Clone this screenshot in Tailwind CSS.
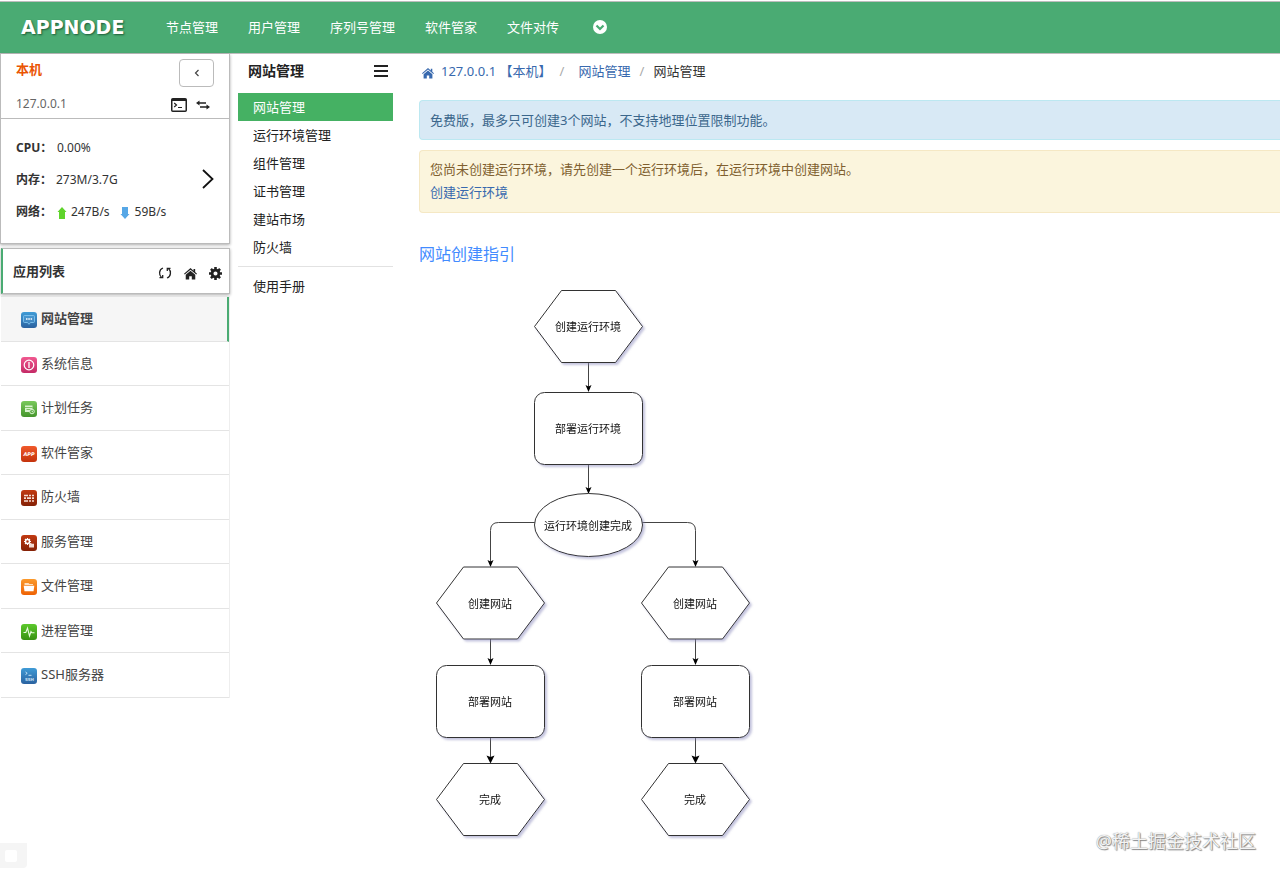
<!DOCTYPE html>
<html lang="zh-CN">
<head>
<meta charset="utf-8">
<meta name="viewport" content="width=device-width, initial-scale=1">
<title>网站管理 - AppNode</title>
<script src="https://cdn.jsdelivr.net/npm/@tailwindcss/browser@4"></script>
</head>
<body class="relative flex min-h-screen flex-col bg-white font-['Noto_Sans','Noto_Sans_CJK_SC',sans-serif] text-[13px] leading-5 text-[#333]">

<svg class="absolute size-0" aria-hidden="true">
  <defs>
    <symbol id="home" viewBox="0 0 12 12">
      <path fill="currentColor" d="M6 1 8.800 3.400V1.800h1.500v2.900L12 6.200l-.7.8L6 2.500.7 7 0 6.200z"/>
      <path fill="currentColor" d="M6 3.500 10.400 7.200V11.500H7.200V8.500H4.800v3H1.600V7.200z"/>
    </symbol>
    <linearGradient id="blue" x2="0" y2="1"><stop stop-color="#3f9bd6"/><stop offset="1" stop-color="#2b62a0"/></linearGradient>
    <linearGradient id="pink" x2="0" y2="1"><stop stop-color="#f0588f"/><stop offset="1" stop-color="#c42a66"/></linearGradient>
    <linearGradient id="green" x2="0" y2="1"><stop stop-color="#79c95c"/><stop offset="1" stop-color="#45952c"/></linearGradient>
    <linearGradient id="red" x2="0" y2="1"><stop stop-color="#f0592b"/><stop offset="1" stop-color="#c4330c"/></linearGradient>
    <linearGradient id="brick" x2="0" y2="1"><stop stop-color="#c23a12"/><stop offset="1" stop-color="#842106"/></linearGradient>
    <linearGradient id="orange" x2="0" y2="1"><stop stop-color="#fb9a2c"/><stop offset="1" stop-color="#ee6204"/></linearGradient>
    <linearGradient id="lime" x2="0" y2="1"><stop stop-color="#5cc92c"/><stop offset="1" stop-color="#389112"/></linearGradient>
  </defs>
</svg>

<header class="mt-px flex h-[53px] items-center border-y border-[#bdbdbd] bg-[#4aab73] pb-[2px] pl-[21px] text-white">
  <a href="#" class="w-[130px] font-['DejaVu_Sans'] text-[19px] leading-6 font-bold [text-shadow:1px_1px_2px_#1d5c38]">APPNODE</a>
  <nav class="flex items-center gap-[30px] pl-[15px]">
    <a href="#">节点管理</a>
    <a href="#">用户管理</a>
    <a href="#">序列号管理</a>
    <a href="#">软件管家</a>
    <a href="#">文件对传</a>
    <button type="button" aria-label="更多" class="ml-1 cursor-pointer">
      <svg class="size-[14px]" viewBox="0 0 14 14"><circle cx="7" cy="7" r="7" fill="#fff"/><path d="M3.500 5.500 7 9l3.500-3.500" fill="none" stroke="#4aab73" stroke-width="2.200"/></svg>
    </button>
  </nav>
</header>

<div class="flex flex-1">
  <aside class="w-[230px] shrink-0">
    <section class="border border-t-0 border-[#bbb] shadow-[0_1px_3px_#0005]">
      <div class="border-b border-[#bbb] pt-[5px] pr-[15px] pb-1 pl-[15px]">
        <div class="flex items-start justify-between">
          <h2 class="font-bold text-[#ea5504]">本机</h2>
          <button type="button" aria-label="收起" class="flex h-7 w-[35px] cursor-pointer items-center justify-center rounded border border-[#bbb]">
            <svg class="size-2" viewBox="0 0 8 8"><path d="M5.500 1 2.500 4l3 3" fill="none" stroke="#444" stroke-width="1.200"/></svg>
          </button>
        </div>
        <div class="mt-[7px] flex items-center justify-between">
          <span class="text-xs leading-5 text-[#666]">127.0.0.1</span>
          <span class="flex items-center gap-[9px] pt-px pr-1">
            <button type="button" aria-label="终端" class="cursor-pointer"><svg class="block h-[14px] w-4" viewBox="0 0 16 14"><rect x=".75" y=".75" width="14.500" height="12.500" rx="1" fill="none" stroke="#222" stroke-width="1.500"/><path d="M1 2h14" stroke="#222" stroke-width="2"/><path d="m3.200 5 2.300 2-2.300 2M7 9.500h4" fill="none" stroke="#222" stroke-width="1.200"/></svg></button>
            <button type="button" aria-label="切换" class="cursor-pointer"><svg class="block h-[10px] w-[14px]" viewBox="0 0 14 10"><path d="M0 3 3.500.5v1.700H10v1.600H3.500v1.700zM14 7l-3.500 2.500V7.800H4V6.200h6.500V4.500z" fill="#222"/></svg></button>
          </span>
        </div>
      </div>
      <div class="flex items-center justify-between pt-[13px] pr-[14px] pb-[15px] pl-[15px] text-xs">
        <dl class="text-xs">
          <div class="flex h-8 items-center"><dt class="w-[41px] font-bold">CPU：</dt><dd>0.00%</dd></div>
          <div class="flex h-8 items-center"><dt class="w-10 font-bold">内存：</dt><dd>273M/3.7G</dd></div>
          <div class="flex h-8 items-center"><dt class="w-10 font-bold">网络：</dt>
            <dd class="flex items-center">
              <svg class="mt-[2px] mr-1 ml-px h-3 w-[10px]" viewBox="0 0 10 12"><path d="M5 0 9.500 5H8v7H2V5H.5z" fill="#5fd42c"/></svg>247B/s
              <svg class="mt-[2px] mr-[5px] ml-[10px] h-3 w-[10px]" viewBox="0 0 10 12"><path d="M5 12 9.500 7H8V0H2v7H.5z" fill="#56a7e6"/></svg>59B/s
            </dd>
          </div>
        </dl>
        <button type="button" aria-label="展开" class="cursor-pointer"><svg class="mb-[2px] h-5 w-[14px]" viewBox="0 0 14 20"><path d="m2 1 9.500 9L2 19" fill="none" stroke="#111" stroke-width="1.800"/></svg></button>
      </div>
    </section>

    <section class="mt-1 ml-px flex h-[46px] items-center justify-between border border-l-2 border-[#bbb] border-l-[#4aab73] pr-[7px] pl-[10px] shadow-[0_1px_3px_#0005]">
      <h2 class="font-bold">应用列表</h2>
      <div class="flex items-center gap-3 pt-1 text-[#222]">
        <button type="button" aria-label="刷新" class="cursor-pointer"><svg class="size-[14px]" viewBox="0 0 14 14" fill="none" stroke="currentColor" stroke-width="1.300"><path d="M5 2C.7 3.500.7 9 3.500 11.500M1.500 11.700h3.200V9M9 12c4.300-1.500 4.300-7 1.500-9.500M12.500 2.300H9.300V5"/></svg></button>
        <button type="button" aria-label="主页" class="cursor-pointer"><svg class="size-[13px]"><use href="#home"/></svg></button>
        <button type="button" aria-label="设置" class="cursor-pointer"><svg class="size-[13px]" viewBox="0 0 14 14"><circle cx="7" cy="7" r="3.700" fill="none" stroke="currentColor" stroke-width="3"/><path d="M7 0v3M7 11v3M0 7h3M11 7h3M2.100 2.100l2 2M9.900 9.900l2 2M2.100 11.900l2-2M9.900 4.100l2-2" stroke="currentColor" stroke-width="2.800"/></svg></button>
      </div>
    </section>

    <ul class="mt-[2px] ml-px border-t border-r border-[#e4e4e4] border-r-[#eee] text-[#444] [&_a]:flex [&_a]:h-full [&_a]:items-center [&_a]:gap-1 [&_a]:pl-5 [&_li]:border-b [&_li]:border-[#e4e4e4] [&_li:nth-child(even)]:h-11 [&_li:nth-child(odd)]:h-[45px] [&_span]:mb-[2px] [&_svg]:mt-[2px] [&_svg]:size-4">
      <li class="border-r-2 border-r-[#4aab73]! bg-[#f6f6f6] font-bold"><a href="#"><svg viewBox="0 0 16 16"><rect width="16" height="16" rx="3" fill="url(#blue)"/><path d="M3.500 3.500h9q1 0 1 1v5q0 1-1 1H9.500L8 12.300 6.500 10.500h-3q-1 0-1-1v-5q0-1 1-1z" fill="#67b0e0" fill-opacity=".3" stroke="#7fc3ee" stroke-width=".9"/><path d="M5 7h1.500M7.300 7h1.500M9.600 7h1.500" stroke="#fff" stroke-width="1.300"/></svg><span>网站管理</span></a></li>
      <li><a href="#"><svg viewBox="0 0 16 16"><rect width="16" height="16" rx="3" fill="url(#pink)"/><circle cx="8" cy="8" r="4.800" fill="none" stroke="#fff" stroke-width="1.200"/><path d="M8 5v6" stroke="#fff" stroke-width="1.300"/></svg><span>系统信息</span></a></li>
      <li><a href="#"><svg viewBox="0 0 16 16"><rect width="16" height="16" rx="3" fill="url(#green)"/><path d="M4 4.500h7.500V11H4z" fill="#d9f2cf"/><path d="M4 6.500h7.500M5.500 8.500h5" stroke="#64b548" stroke-width=".8"/><circle cx="11" cy="10.500" r="2.300" fill="#59a93f" stroke="#d9f2cf"/><path d="M11 9.500v1.200h1" fill="none" stroke="#fff" stroke-width=".7"/></svg><span>计划任务</span></a></li>
      <li><a href="#"><svg viewBox="0 0 16 16"><rect width="16" height="16" rx="3" fill="url(#red)"/><text x="8" y="10" text-anchor="middle" font-family="DejaVu Sans" font-size="5" font-weight="bold" font-style="italic" fill="#fff">APP</text></svg><span>软件管家</span></a></li>
      <li><a href="#"><svg viewBox="0 0 16 16"><rect width="16" height="16" rx="3" fill="url(#brick)"/><path d="M3 5.500h4M8 5.500h2M11 5.500h2M3 8.200h2M6 8.200h4M11 8.200h2M3 11h4M8 11h2M11 11h2" stroke="#f6ded5" stroke-width="1.700"/></svg><span>防火墙</span></a></li>
      <li><a href="#"><svg viewBox="0 0 16 16"><rect width="16" height="16" rx="3" fill="url(#brick)"/><circle cx="6.500" cy="6.500" r="2" fill="none" stroke="#fff" stroke-width="1.500"/><path d="M6.500 3v1.500M6.500 8.500V10M3 6.500h1.500M8.500 6.500H10M4 4l1 1M8 5l1-1M4 9l1-1" stroke="#fff" stroke-width="1.200"/><path d="M8 8h2l.8.800H13V12.500H8z" fill="#f3d9d0"/></svg><span>服务管理</span></a></li>
      <li><a href="#"><svg viewBox="0 0 16 16"><rect width="16" height="16" rx="3" fill="url(#orange)"/><path d="M3.500 6V4h4l1 1H12v1z" fill="#ffe0bd"/><path d="M2.700 6.700h10.600l-.8 5.600h-9z" fill="#fff"/></svg><span>文件管理</span></a></li>
      <li><a href="#"><svg viewBox="0 0 16 16"><rect width="16" height="16" rx="3" fill="url(#lime)"/><path d="M2.500 8.500h2.300L6.500 4l2 8 1.500-4.500.8 1.200h2.700" fill="none" stroke="#e9fbe0" stroke-width="1.100"/></svg><span>进程管理</span></a></li>
      <li><a href="#"><svg viewBox="0 0 16 16"><rect width="16" height="16" rx="3" fill="url(#blue)"/><path d="m4.500 4 1.700 1.300L4.500 6.600M7.500 7.300h3" fill="none" stroke="#d4ecfb" stroke-width=".9"/><text x="8.500" y="13" text-anchor="middle" font-family="DejaVu Sans" font-size="4" font-weight="bold" fill="#cfe6f7">SSH</text></svg><span>SSH服务器</span></a></li>
    </ul>
  </aside>

  <nav class="ml-2 w-[155px] shrink-0 text-[#222]">
    <div class="flex h-[39px] items-center justify-between pr-[5px] pb-[6px] pl-[10px]">
      <h2 class="text-sm leading-5 font-bold">网站管理</h2>
      <button type="button" aria-label="菜单" class="cursor-pointer"><svg class="block h-3 w-[14px]" viewBox="0 0 14 12"><path d="M0 1h14M0 6h14M0 11h14" stroke="#222" stroke-width="2"/></svg></button>
    </div>
    <div class="[&_a]:flex [&_a]:h-7 [&_a]:items-center [&_a]:pb-px [&_a]:pl-[15px]">
      <a href="#" class="bg-[#45b163] text-white">网站管理</a>
      <a href="#">运行环境管理</a>
      <a href="#">组件管理</a>
      <a href="#">证书管理</a>
      <a href="#">建站市场</a>
      <a href="#">防火墙</a>
      <hr class="mt-[5px] mb-[5px] border-[#e2e2e2]">
      <a href="#">使用手册</a>
    </div>
  </nav>

  <main class="ml-[26px] min-w-0 flex-1">
    <nav aria-label="breadcrumb" class="flex h-[46px] items-center pb-[13px] pl-[3px] text-[#3869ae]">
      <svg class="mt-1 mr-[7px] size-3"><use href="#home"/></svg>
      <a href="#">127.0.0.1 【本机】</a>
      <span class="w-[27px] pl-2 text-[#aaa]">/</span>
      <a href="#">网站管理</a>
      <span class="w-[23px] pl-[9px] text-[#aaa]">/</span>
      <span class="text-[#333]">网站管理</span>
    </nav>
    <p class="flex h-10 items-center rounded-l border border-r-0 border-[#bce8f1] bg-[#d8e9f5] px-[10px] text-[#3b678c]">免费版，最多只可创建3个网站，不支持地理位置限制功能。</p>
    <div class="mt-[10px] rounded-l border border-r-0 border-[#f5e8c4] bg-[#fbf5dd] px-[10px] pt-[7px] pb-2 leading-[23px] text-[#80602f]">
      <p>您尚未创建运行环境，请先创建一个运行环境后，在运行环境中创建网站。</p>
      <a href="#" class="block text-[#3869ae]">创建运行环境</a>
    </div>
    <h1 class="mt-[29px] text-base leading-6 text-[#428bff]">网站创建指引</h1>

    <svg class="mt-[14px] block h-[565px] w-[340px]" viewBox="419 280 340 565" role="img" aria-label="网站创建流程图">
      <defs>
        <filter id="shade" x="-10%" y="-10%" width="130%" height="130%"><feDropShadow dx="2" dy="2" stdDeviation="1" flood-color="#8888bb" flood-opacity=".5"/></filter>
        <path id="hex" d="M-54 0-27-36H27L54 0 27 36H-27z"/>
        <rect id="box" x="-54" y="-36" width="108" height="72" rx="10"/>
        <path id="tip" d="M0 0-3-7 0-5.500 3-7z"/>
        <path id="bigtip" d="M0 0-4-8 0-6.500 4-8z"/>
      </defs>
      <g fill="none" stroke="#444" stroke-width="1">
        <path d="M588.500 362v28M588.500 464v27M535 522.500h-36.500q-8 0-8 8V565M642 522.500h45.500q8 0 8 8V565M490.500 639v24M695.500 639v24M490.500 737v24M695.500 737v24"/>
      </g>
      <g fill="#000">
        <use href="#tip" x="588.500" y="392"/><use href="#tip" x="588.500" y="494"/>
        <use href="#tip" x="490.500" y="567"/><use href="#tip" x="695.500" y="567"/>
        <use href="#tip" x="490.500" y="665"/><use href="#tip" x="695.500" y="665"/>
        <use href="#bigtip" x="490.500" y="763.500"/><use href="#bigtip" x="695.500" y="763.500"/>
      </g>
      <g fill="#fff" stroke="#333" stroke-width="1" filter="url(#shade)">
        <use href="#hex" x="588.500" y="326.500"/>
        <use href="#box" x="588.500" y="428.500"/>
        <ellipse cx="588.500" cy="525" rx="54" ry="31.500"/>
        <use href="#hex" x="490.500" y="603"/><use href="#hex" x="695.500" y="603"/>
        <use href="#box" x="490.500" y="701.500"/><use href="#box" x="695.500" y="701.500"/>
        <use href="#hex" x="490.500" y="799.500"/><use href="#hex" x="695.500" y="799.500"/>
      </g>
      <g fill="#111" font-size="11" text-anchor="middle">
        <text x="588" y="331">创建运行环境</text>
        <text x="588" y="433">部署运行环境</text>
        <text x="588" y="530">运行环境创建完成</text>
        <text x="490" y="608">创建网站</text><text x="695" y="608">创建网站</text>
        <text x="490" y="706">部署网站</text><text x="695" y="706">部署网站</text>
        <text x="490" y="804">完成</text><text x="695" y="804">完成</text>
      </g>
    </svg>
  </main>
</div>

<div class="absolute bottom-[5px] left-0 flex h-[25px] w-[27px] items-center rounded-br bg-[#f5f5f5] pl-[5px]"><span class="size-3 rounded-xs bg-white"></span></div>
<p class="absolute right-6 bottom-5 text-lg leading-6 text-[#f4f4f4] [text-shadow:0_0_1px_#777,1px_1px_1px_#888]">@稀土掘金技术社区</p>
</body>
</html>
